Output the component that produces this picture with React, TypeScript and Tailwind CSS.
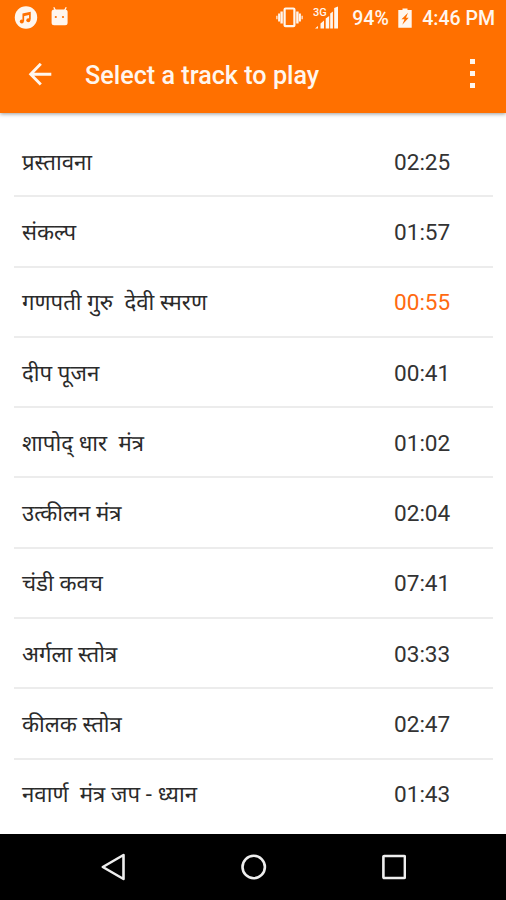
type Track = {
    title: string;
    time: string;
    active?: boolean;
};

const tracks: Track[] = [
    { title: "प्रस्तावना", time: "02:25" },
    { title: "संकल्प", time: "01:57" },
    { title: "गणपती गुरु  देवी स्मरण", time: "00:55", active: true },
    { title: "दीप पूजन", time: "00:41" },
    { title: "शापोद् धार  मंत्र", time: "01:02" },
    { title: "उत्कीलन मंत्र", time: "02:04" },
    { title: "चंडी कवच", time: "07:41" },
    { title: "अर्गला स्तोत्र", time: "03:33" },
    { title: "कीलक स्तोत्र", time: "02:47" },
    { title: "नवार्ण  मंत्र जप - ध्यान", time: "01:43" },
];

const StatusBar = () => (
    <div className="flex h-9 items-center justify-between pl-3.5 pr-[11px]">
        <div className="flex items-center gap-3">
            <svg className="h-6 w-6" viewBox="0 0 24 24" fill="none">
                <circle cx="12" cy="11.5" r="11.2" fill="#fff6ee" />
                <path d="M9.3 15.2V8.2l6.6-1.5v7" stroke="#ff7000" strokeWidth="1.7" />
                <path d="M9.3 9.2l6.6-1.5" stroke="#ff7000" strokeWidth="2" />
                <circle cx="7.8" cy="15.6" r="2" fill="#ff7000" />
                <circle cx="14.3" cy="14.3" r="2" fill="#ff7000" />
            </svg>
            <svg className="h-6 w-5" viewBox="0 0 20 24">
                <path d="M3.8 1.2l2 4M16.2 1.2l-2 4" stroke="#fff6ee" strokeWidth="1.3" />
                <rect x="1.6" y="3.5" width="16" height="15.8" rx="2.5" fill="#fff6ee" />
                <circle cx="5.8" cy="11" r="1.1" fill="#ff7000" />
                <circle cx="13" cy="11" r="1.1" fill="#ff7000" />
            </svg>
        </div>
        <div className="flex items-center font-medium text-[#fff6ee]">
            <svg className="mr-[10px] h-6 w-[27px]" viewBox="0 0 27 24" fill="none" stroke="#fff6ee">
                <rect x="8.6" y="2.5" width="9.8" height="17.7" rx="1" strokeWidth="2.2" />
                <path d="M5.6 5.5v12M21.4 5.5v12" strokeWidth="2.4" />
                <path d="M3.1 7.5v8M23.9 7.5v8" strokeWidth="2" />
                <path d="M.9 9.8v3.4M26.1 9.8v3.4" strokeWidth="1.2" />
            </svg>
            <svg className="mr-[13px] h-6 w-[26px]" viewBox="0 0 26 24" fill="#fff6ee">
                <text x="0" y="9.5" fontFamily="Roboto, sans-serif" fontSize="11" fontWeight="500">3G</text>
                <path d="M2 22.5l3-2.5v2.5zM7.5 22.5v-5l3.5-3v8zM12.7 22.5V12.500l3.500-2.500v12.500zM17.200 22.500V7.500l2.700-2v17zM21.200 22.500V2l3.800-1.500v22z" />
            </svg>
            <span className="w-[46px] pt-px text-[19.5px] leading-6">94%</span>
            <svg className="mr-[10px] h-6 w-[14px]" viewBox="0 0 14 24">
                <path d="M4.500 2.500h5v1.500h4.200v17.800H.3V4h4.200z" fill="#fff6ee" />
                <path d="M10 6.800l-6.500 6.500h3l-2.200 5.500 6.400-7H8z" fill="#ff7000" />
            </svg>
            <span className="pt-px text-[19.5px] leading-6">4:46 PM</span>
        </div>
    </div>
);

const AppBar = () => (
    <div className="flex h-[77px] items-center pl-7 pr-[27px]">
        <svg className="h-6 w-6" viewBox="0 0 24 24" fill="none" stroke="#fff6ee" strokeWidth="2.9">
            <path d="M12.800 .8L2.700 11.200l10.100 10.300M2.700 11.200h20.600" />
        </svg>
        <h1 className="ml-[33px] flex-1 pt-[2px] text-[25.2px] leading-8 font-medium text-[#fff6ee]">
            Select a track to play
        </h1>
        <div className="flex w-[13px] flex-col items-center gap-[7px] pb-[2px]">
            <span className="h-[5px] w-[5px] bg-[#fff6ee]" />
            <span className="h-[5px] w-[5px] bg-[#fff6ee]" />
            <span className="h-[5px] w-[5px] bg-[#fff6ee]" />
        </div>
    </div>
);

const NavBar = () => (
    <div className="flex h-[66.5px] shrink-0 items-center justify-between bg-black pr-[100px] pl-[101px]">
        <svg className="h-7 w-6" viewBox="0 0 24 28" fill="none" stroke="#eee" strokeWidth="2.6">
            <path d="M22.500 2v24L1.800 14z" strokeLinejoin="round" />
        </svg>
        <svg className="h-7 w-7" viewBox="0 0 28 28" fill="none" stroke="#eee" strokeWidth="2.6">
            <circle cx="13.700" cy="14" r="11.200" />
        </svg>
        <svg className="h-7 w-6" viewBox="0 0 24 28" fill="none" stroke="#eee" strokeWidth="2.6">
            <rect x="1.400" y="3" width="21.500" height="22" rx="0.800" />
        </svg>
    </div>
);

const App = () => {
    return (
        <div className="flex h-[900px] w-[506px] flex-col overflow-hidden bg-white font-['Roboto','Noto_Sans_Devanagari','Noto_Sans',sans-serif]">
            <header className="h-[113px] shrink-0 bg-[#ff7000] shadow-[0_1px_4px_rgba(0,0,0,0.4)]">
                <StatusBar />
                <AppBar />
            </header>
            <ul className="min-h-0 flex-1 pt-[14px] pr-[13px] pl-[14px]">
                {tracks.map((track) => (
                    <li
                        key={track.title}
                        className="flex h-[70.3px] items-center border-b-2 border-[#ececec] pt-[3px] pl-2 last:border-transparent"
                    >
                        <span className="flex-1 pb-[2px] text-[22.2px] leading-8 [word-spacing:0.2px] whitespace-pre text-[#2b2b2b]">{track.title}</span>
                        <span className={`w-[99px] text-[22.6px] leading-8 ${track.active ? "text-[#ff6a10]" : "text-[#333]"}`}>
                            {track.time}
                        </span>
                    </li>
                ))}
            </ul>
            <NavBar />
        </div>
    );
};

export default App;
